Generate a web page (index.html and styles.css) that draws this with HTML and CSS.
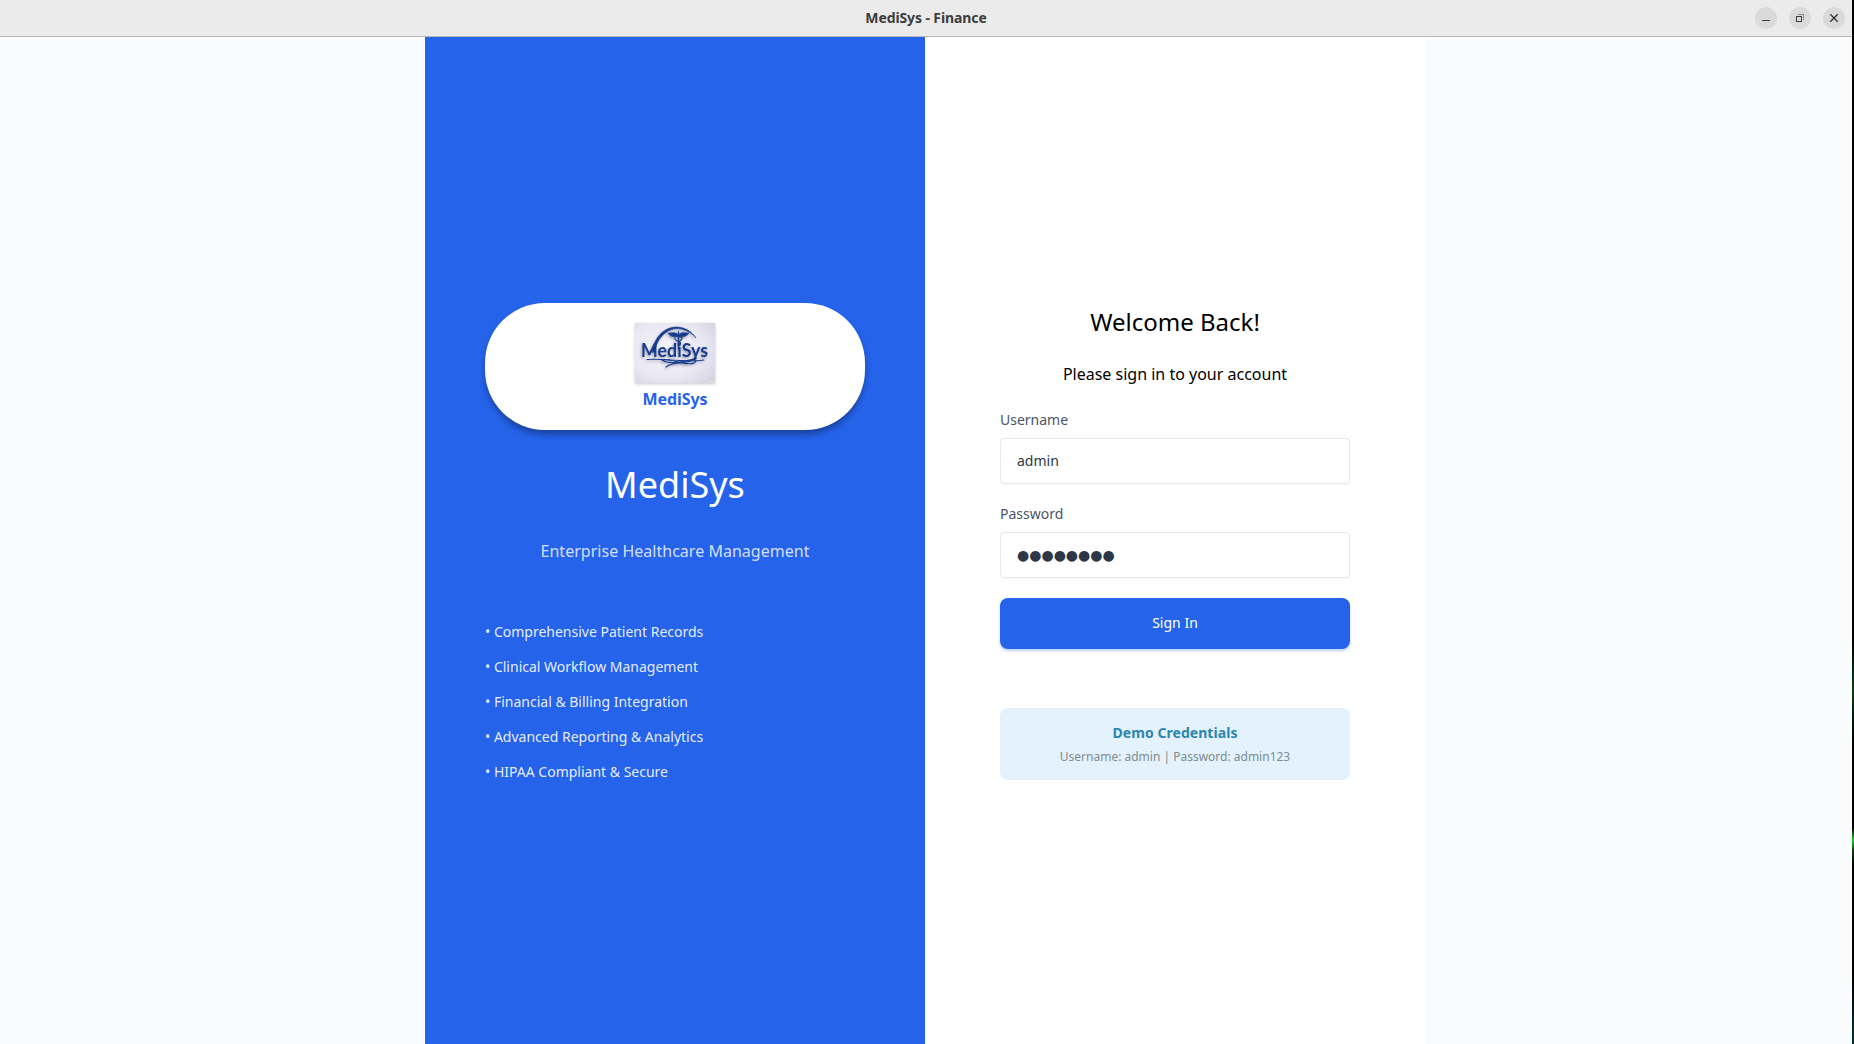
FILE: index.html
```html
<!DOCTYPE html>
<html lang="en">
<head>
<meta charset="utf-8">
<title>MediSys - Finance</title>
<link rel="stylesheet" href="styles.css">
</head>
<body>
<div class="window">
  <header class="titlebar">
    <span class="titlebar-text">MediSys - Finance</span>
    <div class="controls">
      <span class="control"><svg width="22" height="22" shape-rendering="crispEdges"><path d="M7 13h8v1H7z" fill="#3d3d3d"/></svg></span>
      <span class="control"><svg width="22" height="22" shape-rendering="crispEdges"><path d="M9 7.500h5.500v5.500" fill="none" stroke="#8a8a8a"/><path d="M7.500 9.500h5v5h-5z" fill="none" stroke="#3d3d3d"/></svg></span>
      <span class="control"><svg width="22" height="22"><path d="M7.300 7.300l7.400 7.400M14.700 7.300l-7.400 7.400" stroke="#3d3d3d" stroke-width="1.500"/></svg></span>
    </div>
  </header>
  <main class="panels">
    <section class="brand">
      <div class="logo-card">
        <svg class="logo" width="80" height="60" viewBox="0 0 80 60">
          <defs>
            <radialGradient id="wall" cx=".4" cy=".45" r=".8"><stop offset="0" stop-color="#f6f5fc"/><stop offset=".6" stop-color="#e9e7f2"/><stop offset="1" stop-color="#d3d0de"/></radialGradient>
            <filter id="relief" x="-20%" y="-20%" width="150%" height="150%"><feDropShadow dx="-1" dy="1.500" stdDeviation=".8" flood-color="#4b4b68" flood-opacity=".5"/></filter>
          </defs>
          <rect width="80" height="60" fill="url(#wall)"/>
          <g filter="url(#relief)" fill="none" stroke="#123c8c" stroke-linecap="round">
            <path d="M17.500 29C19 15 28 5 40 4C50 3.500 57 9 61 15C55 8 48 5.500 41 5.500C30 6.500 21 17 20 29z" fill="#123c8c" stroke-width=".6"/>
            <path d="M43.500 9V26" stroke-width="1.500"/>
            <path d="M43.500 12C41 8.500 37 10 33 10C35 13 38 14.500 43.500 13.500C48 14.500 52 13 54 10C50 10 46 8.500 43.500 12z" fill="#123c8c" stroke-width=".7"/>
            <path d="M40 15C39 19 48 18 45 21C43 23 42 20 46 17C48 15 47 14 45 14" stroke-width="1.200"/>
            <path d="M12 36.500C28 35 48 40 69 37" stroke-width="1.100"/>
            <path d="M31 44C40 37 47 42 55 38C60 35 63 37 59 40C50 44 34 34 27 37C35 42 47 39 62 35" stroke-width="1.100"/>
            <text class="logo-word" x="6" y="34" textLength="67" lengthAdjust="spacingAndGlyphs">MediSys</text>
          </g>
          <path d="M75 58.500h1M78 58.500h1" stroke="#fff"/>
        </svg>
        <span class="logo-name">MediSys</span>
      </div>
      <h1 class="brand-title">MediSys</h1>
      <p class="brand-subtitle">Enterprise Healthcare Management</p>
      <ul class="features">
        <li>• Comprehensive Patient Records</li>
        <li>• Clinical Workflow Management</li>
        <li>• Financial &amp; Billing Integration</li>
        <li>• Advanced Reporting &amp; Analytics</li>
        <li>• HIPAA Compliant &amp; Secure</li>
      </ul>
    </section>
    <section class="login">
      <h2 class="welcome">Welcome Back!</h2>
      <p class="prompt">Please sign in to your account</p>
      <span class="label label-username">Username</span>
      <div class="field">admin</div>
      <span class="label label-password">Password</span>
      <div class="field password">●●●●●●●●</div>
      <button class="submit">Sign In</button>
      <div class="demo">
        <strong class="demo-title">Demo Credentials</strong>
        <span class="demo-text">Username: admin | Password: admin123</span>
      </div>
    </section>
  </main>
</div>
</body>
</html>
```
FILE: styles.css
```css
* { box-sizing: border-box; }
body {
  margin: 0;
  height: 1044px;
  overflow: hidden;
  font-family: "Noto Sans", sans-serif;
  background: linear-gradient(#000 640px, #02401a 690px, #000 740px, #000 828px, #20d020 840px, #064406 850px, #000 865px, #000 980px, #022a2a 1030px);
}
h1, h2, p, ul { margin: 0; padding: 0; font-weight: 400; }
.window { width: 1852px; height: 1044px; display: flex; flex-direction: column; background: #fafbfd; }
.titlebar {
  height: 37px;
  flex: none;
  display: grid;
  grid-template-columns: 1fr auto 1fr;
  align-items: center;
  padding-right: 7px;
  padding-left: 7px;
  background: #ebebeb;
  border-bottom: 1px solid #b9b9b9;
}
.titlebar-text { grid-column: 2; font-size: 14px; line-height: 20px; font-weight: 700; letter-spacing: -.1px; color: #3d3d3d; }
.controls { display: flex; gap: 12px; justify-content: flex-end; }
.control { width: 22px; height: 22px; border-radius: 50%; background: #dadada; }
.control svg { display: block; }
.panels { flex: 1; display: flex; justify-content: center; padding-right: 2px; }
.brand, .login { width: 500px; display: flex; flex-direction: column; }
.brand { background: #2563eb; color: #fff; padding: 266px 60px 0; }
.logo-card {
  height: 127px;
  flex: none;
  display: flex;
  flex-direction: column;
  align-items: center;
  padding-top: 20px;
  border-radius: 60px;
  background: #fff;
  box-shadow: 0 5px 7px -1px rgba(0, 0, 0, .36);
}
.logo { display: block; box-shadow: 0 1px 3px rgba(0, 0, 0, .22); }
.logo-word { font: 700 19px Lato, sans-serif; fill: #123c8c; stroke: none; }
.logo-name { margin-top: 5px; font-size: 16px; line-height: 22px; font-weight: 700; letter-spacing: -.1px; color: #2563eb; }
.brand-title { margin-top: 30px; font-size: 36px; line-height: 49px; text-align: center; }
.brand-subtitle { margin-top: 31px; font-size: 16px; line-height: 22px; text-align: center; letter-spacing: .02px; color: rgba(255, 255, 255, .8); }
.features { margin-top: 60px; list-style: none; display: flex; flex-direction: column; gap: 16px; font-size: 14px; line-height: 19px; color: rgba(255, 255, 255, .9); }
.login { background: #fff; padding: 268px 75px 0; }
.welcome { font-size: 24px; line-height: 33px; text-align: center; color: #000; }
.prompt { margin-top: 25px; font-size: 16px; line-height: 22px; text-align: center; color: #000; }
.label { font-size: 14px; line-height: 19px; color: #4a5568; }
.label-username { margin-top: 25px; }
.label-password { margin-top: 20px; }
.field {
  height: 46px;
  margin-top: 9px;
  padding: 0 16px 2px;
  display: flex;
  align-items: center;
  border: 1px solid #e2e8f0;
  border-radius: 4px;
  box-shadow: 0 1px 1px rgba(0, 0, 0, .04);
  font-size: 14px;
  color: #2d3748;
}
.password { padding-bottom: 0; font-family: "DejaVu Sans", sans-serif; font-size: 14px; }
.submit {
  height: 51px;
  margin-top: 20px;
  padding: 0 0 2px;
  border: 0;
  border-radius: 8px;
  background: #2563eb;
  box-shadow: 0 2px 3px rgba(37, 99, 235, .3);
  color: #fff;
  font: 400 14px "Noto Sans", sans-serif;
}
.demo { height: 72px; margin-top: 59px; padding-top: 15px; display: flex; flex-direction: column; align-items: center; gap: 6px; border-radius: 8px; background: #e3f2fd; }
.demo-title { font-size: 14px; line-height: 19px; letter-spacing: .05px; color: #2e86ab; }
.demo-text { font-size: 12px; line-height: 17px; color: #7f8c8d; }
```
